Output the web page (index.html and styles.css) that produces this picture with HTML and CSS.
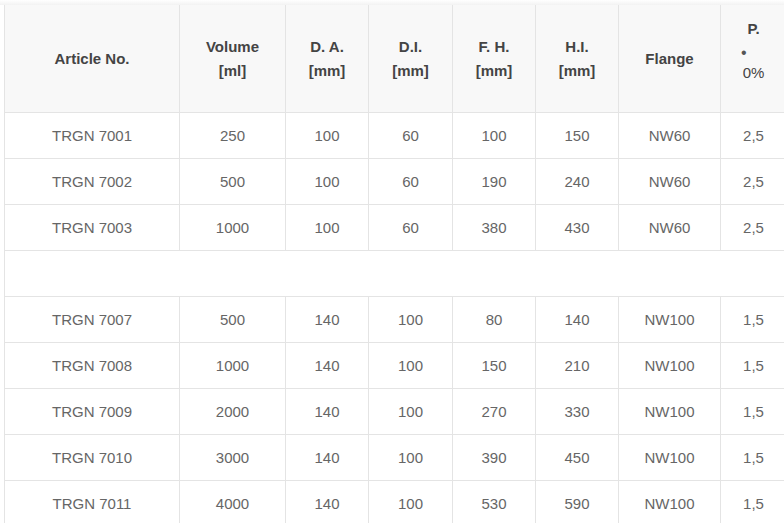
FILE: index.html
```html
<!DOCTYPE html>
<html>
<head>
<meta charset="utf-8">
<link rel="stylesheet" href="styles.css">
</head>
<body>
<div class="wrap">
  <div class="topshade"></div>
  <table class="spec">
    <colgroup>
      <col class="c1"><col class="c2"><col class="c3"><col class="c4"><col class="c5"><col class="c6"><col class="c7"><col class="c8">
    </colgroup>
    <thead>
      <tr>
        <th>Article No.</th>
        <th>Volume<br>[ml]</th>
        <th>D. A.<br>[mm]</th>
        <th>D.I.<br>[mm]</th>
        <th>F. H.<br>[mm]</th>
        <th>H.I.<br>[mm]</th>
        <th>Flange</th>
        <th class="pcol"><span class="p">P.</span><span class="dot">•</span><span class="pct">0%</span></th>
      </tr>
    </thead>
    <tbody>
      <tr><td>TRGN 7001</td><td>250</td><td>100</td><td>60</td><td>100</td><td>150</td><td>NW60</td><td>2,5</td></tr>
      <tr><td>TRGN 7002</td><td>500</td><td>100</td><td>60</td><td>190</td><td>240</td><td>NW60</td><td>2,5</td></tr>
      <tr><td>TRGN 7003</td><td>1000</td><td>100</td><td>60</td><td>380</td><td>430</td><td>NW60</td><td>2,5</td></tr>
      <tr class="gap"><td colspan="8"></td></tr>
      <tr><td>TRGN 7007</td><td>500</td><td>140</td><td>100</td><td>80</td><td>140</td><td>NW100</td><td>1,5</td></tr>
      <tr><td>TRGN 7008</td><td>1000</td><td>140</td><td>100</td><td>150</td><td>210</td><td>NW100</td><td>1,5</td></tr>
      <tr><td>TRGN 7009</td><td>2000</td><td>140</td><td>100</td><td>270</td><td>330</td><td>NW100</td><td>1,5</td></tr>
      <tr><td>TRGN 7010</td><td>3000</td><td>140</td><td>100</td><td>390</td><td>450</td><td>NW100</td><td>1,5</td></tr>
      <tr><td>TRGN 7011</td><td>4000</td><td>140</td><td>100</td><td>530</td><td>590</td><td>NW100</td><td>1,5</td></tr>
    </tbody>
  </table>
</div>
</body>
</html>
```
FILE: styles.css
```css
html, body {
  margin: 0;
  padding: 0;
  background: #fff;
  overflow: hidden;
}
.wrap {
  width: 784px;
  height: 523px;
  overflow: hidden;
  padding-left: 4px;
  box-sizing: border-box;
}
.topshade {
  height: 5px;
  margin-left: -4px;
  background: linear-gradient(to bottom, #ffffff, #f2f2f2);
}
.spec {
  border-collapse: collapse;
  table-layout: fixed;
  width: 782px;
  font-family: "Liberation Sans", Arial, sans-serif;
  font-size: 15px;
  color: #666;
}
.c1 { width: 175px; }
.c2 { width: 106px; }
.c3 { width: 83px; }
.c4 { width: 84px; }
.c5 { width: 83px; }
.c6 { width: 83px; }
.c7 { width: 102px; }
.c8 { width: 66px; }
.spec th, .spec td {
  border: 1px solid #e4e4e4;
  text-align: center;
  vertical-align: middle;
  padding: 0 6px;
}
.spec thead th {
  background: #f8f8f8;
  color: #444;
  font-weight: bold;
  line-height: 24px;
  height: 107px;
  border-top: none;
}
.spec tbody td {
  height: 45px;
  line-height: 20px;
  background: #fff;
}
.spec tbody tr.gap td {
  height: 45px;
}
.pcol .p, .pcol .dot, .pcol .pct {
  display: block;
  line-height: 22px;
}
.pcol .dot {
  font-weight: normal;
  font-size: 16px;
  color: #555;
  text-align: left;
  padding-left: 14px;
  position: relative;
  top: 2px;
}
.pcol .pct {
  font-weight: normal;
  color: #444;
  margin-bottom: 16px;
}
```
